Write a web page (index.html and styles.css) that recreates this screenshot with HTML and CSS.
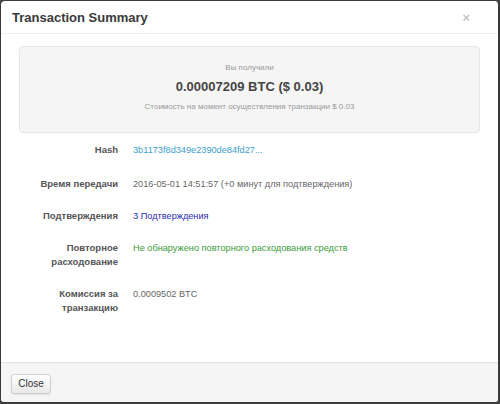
FILE: index.html
```html
<!DOCTYPE html>
<html>
<head>
<meta charset="utf-8">
<link rel="stylesheet" href="styles.css">
</head>
<body>
<div class="modal">
  <div class="modal-header">
    <h3 class="title">Transaction Summary</h3>
    <span class="close">×</span>
  </div>
  <div class="modal-body">
    <div class="well">
      <div class="well-small">Вы получили</div>
      <div class="well-amount">0.00007209 BTC ($ 0.03)</div>
      <div class="well-small">Стоимость на момент осуществления транзакции $ 0.03</div>
    </div>
    <div class="rows">
      <div class="label">Hash</div>
      <div class="value link">3b1173f8d349e2390de84fd27...</div>
      <div class="label">Время передачи</div>
      <div class="value">2016-05-01 14:51:57 (+0 минут для подтверждения)</div>
      <div class="label">Подтверждения</div>
      <div class="value blue">3 Подтверждения</div>
      <div class="label">Повторное расходование</div>
      <div class="value green">Не обнаружено повторного расходования средств</div>
      <div class="label">Комиссия за транзакцию</div>
      <div class="value">0.0009502 BTC</div>
    </div>
  </div>
  <div class="modal-footer">
    <button class="btn">Close</button>
  </div>
</div>
</body>
</html>
```

FILE: styles.css
```css
html {
  background: #4a4a4a;
}
body {
  margin: 0;
  font-family: "Liberation Sans", Arial, sans-serif;
}
.modal {
  box-sizing: border-box;
  width: 500px;
  height: 404px;
  border: 1px solid #3a3a3a;
  border-right-width: 2px;
  border-bottom-width: 2px;
  border-radius: 5px;
  background: #fff;
  display: flex;
  flex-direction: column;
  overflow: hidden;
}
.modal-header {
  height: 32px;
  border-bottom: 1px solid #eeeeee;
  display: flex;
  align-items: center;
  justify-content: space-between;
  padding: 0 28px 0 11px;
}
.title {
  margin: 0;
  font-size: 13px;
  font-weight: bold;
  color: #3a3a3a;
}
.close {
  font-size: 13px;
  font-weight: bold;
  color: #c4c4c4;
  line-height: 1;
}
.modal-body {
  flex: 1;
  padding: 12px 18px 0 18px;
}
.well {
  height: 87px;
  background: #f5f5f5;
  border: 1px solid #e6e6e6;
  border-radius: 4px;
  display: flex;
  flex-direction: column;
  align-items: center;
  padding-top: 15px;
  box-sizing: border-box;
}
.well-small {
  font-size: 8px;
  color: #999;
  line-height: 12px;
}
.well-amount {
  font-size: 13px;
  font-weight: bold;
  color: #444;
  line-height: 16px;
  margin: 5px 0 6px;
}
.rows {
  display: grid;
  grid-template-columns: 99px 1fr;
  column-gap: 15px;
  row-gap: 18px;
  margin-top: 10px;
  line-height: 14px;
}
.label {
  text-align: right;
  font-weight: bold;
  font-size: 9.5px;
  color: #555;
}
.rows > .label:first-child,
.rows > .label:first-child + .value {
  padding-bottom: 2px;
}
.value {
  font-size: 9.2px;
  color: #666;
}
.link {
  color: #3aa0cc;
}
.blue {
  color: #2b2bb0;
}
.green {
  color: #3a9a3a;
}
.modal-footer {
  height: 40px;
  box-sizing: border-box;
  background: #f5f5f5;
  border-top: 1px solid #e2e2e2;
  padding: 10px 10px 0 10px;
}
.btn {
  width: 40px;
  height: 20px;
  padding: 0;
  font-family: "Liberation Sans", Arial, sans-serif;
  font-size: 10px;
  color: #333;
  background: linear-gradient(#ffffff, #e8e8e8);
  border: 1px solid #cfcfcf;
  border-radius: 3px;
  box-shadow: 0 1px 1px rgba(0,0,0,0.08);
}
```
